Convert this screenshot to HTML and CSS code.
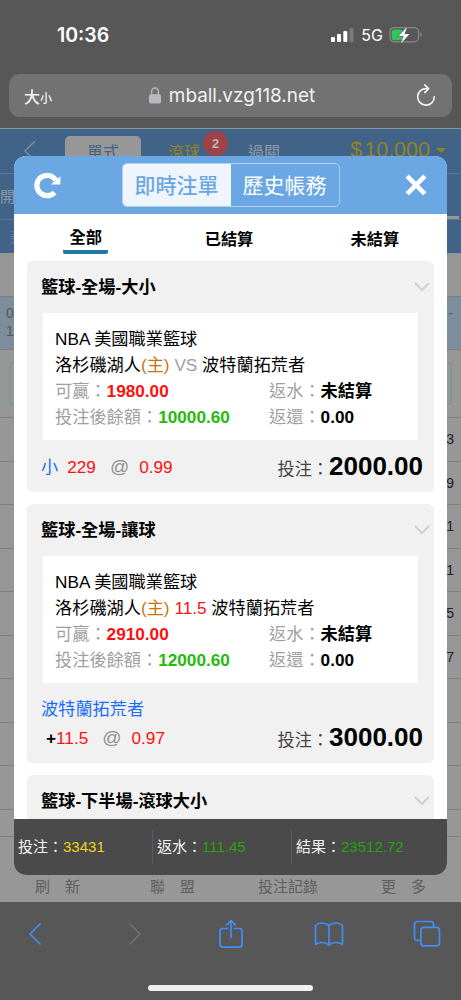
FILE: index.html
```
<!DOCTYPE html>
<html lang="zh-Hant">
<head>
    <meta charset="UTF-8">
    <meta name="viewport" content="width=device-width, initial-scale=1.0">
    <title>即時注單</title>
    <link rel="stylesheet" href="styles.css">
</head>
<body>
<div class="phone">
    <div class="status-bar">
        <span class="clock">10:36</span>
        <div class="status-icons">
            <svg class="signal" width="24" height="16" viewBox="0 0 24 16">
                <rect x="0" y="10" width="4" height="5" rx="1" fill="#fff"/>
                <rect x="6" y="7" width="4" height="8" rx="1" fill="#fff"/>
                <rect x="12.3" y="4" width="4" height="11" rx="1" fill="#fff"/>
                <rect x="18.5" y="1" width="4" height="14" rx="1" fill="#7b7b7b"/>
            </svg>
            <span class="network">5G</span>
            <svg class="battery" width="34" height="18" viewBox="0 0 34 18">
                <rect x="1" y="1.7" width="28.6" height="14.2" rx="4.3" fill="none" stroke="#8b8b8b" stroke-width="1.2"/>
                <path d="M31.2 6.5v4.6q1.6-.7 1.6-2.3t-1.6-2.3z" fill="#8b8b8b"/>
                <rect x="2.7" y="3.4" width="11" height="10.8" rx="2.8" fill="#32c759"/>
                <path d="M18.2.8L9.400 10h5.200l-2.800 7.400L20.700 8h-5.200z" fill="#fff" stroke="#575757" stroke-width="1.2" paint-order="stroke"/>
            </svg>
        </div>
    </div>

    <div class="address-bar">
        <span class="text-size">大<small>小</small></span>
        <div class="url">
            <svg width="12" height="17" viewBox="0 0 12 17">
                <rect x="0" y="7.3" width="12" height="9.2" rx="1.8" fill="#b9b8bf"/>
                <path d="M2.6 8V4.6a3.4 3.6 0 0 1 6.8 0V8" fill="none" stroke="#b9b8bf" stroke-width="1.4"/>
            </svg>
            <span>mball.vzg118.net</span>
        </div>
        <svg class="reload" width="20" height="23" viewBox="0 0 20 23">
            <path d="M11 4.6A8.300 8.300 0 1 0 18.300 12.800M8.800.900l3.800 3.800-3.800 3.900" fill="none" stroke="#f1f1f1" stroke-width="1.7" stroke-linecap="round" stroke-linejoin="round"/>
        </svg>
    </div>

    <div class="page">
        <div class="page-head">
            <div class="page-nav">
                <svg class="page-back" width="12" height="22" viewBox="0 0 12 22">
                    <path d="M11 1L1 11l10 10" fill="none" stroke="#7c94ab" stroke-width="1.2"/>
                </svg>
                <span class="page-tab active">單式</span>
                <span class="page-tab live">滾球<b class="badge">2</b></span>
                <span class="page-tab">過關</span>
                <span class="balance"><i>$</i>10,000<i class="caret"></i></span>
            </div>
            <div class="page-sub"><span>開</span><i class="underline"></i></div>
            <div class="page-sub league"><span>美</span></div>
        </div>
        <div class="page-row gap"></div>
        <div class="page-row match"><div>0<br>1</div><span>-</span></div>
        <div class="page-row odds"><div class="odds-box"></div></div>
        <div class="page-row line">3</div>
        <div class="page-row line">9</div>
        <div class="page-row line">1</div>
        <div class="page-row line">1</div>
        <div class="page-row line">5</div>
        <div class="page-row line">7</div>
        <div class="page-row line"></div>
        <div class="page-row line"></div>
        <div class="page-row line"></div>
        <div class="page-row line short"></div>
        <div class="page-foot">
            <span>刷　新</span>
            <span>聯　盟</span>
            <span>投注記錄</span>
            <span>更　多</span>
        </div>

        <div class="modal">
            <div class="modal-head">
                <svg class="refresh" width="27" height="27" viewBox="0 0 27 27">
                    <path d="M20.600 20.400A10.200 10.200 0 1 1 21.800 8.200" fill="none" stroke="#fff" stroke-width="5.2"/>
                    <path d="M26.400 4.300v8.100h-9.400z" fill="#fff"/>
                </svg>
                <div class="switch">
                    <span class="active">即時注單</span>
                    <span>歷史帳務</span>
                </div>
                <svg class="close" width="22" height="22" viewBox="0 0 22 22">
                    <path d="M2.200 2.200l17.600 17.600M19.800 2.200L2.200 19.800" stroke="#fff" stroke-width="4.6"/>
                </svg>
            </div>

            <div class="tabs">
                <span class="active">全部</span>
                <span>已結算</span>
                <span>未結算</span>
            </div>

            <div class="bets">
                <section class="card">
                    <div class="card-title">
                        <h2>籃球-全場-大小</h2>
                        <svg class="chevron" width="16" height="10" viewBox="0 0 16 10"><path d="M1 1l7 7 7-7"/></svg>
                    </div>
                    <div class="info">
                        <p>NBA 美國職業籃球</p>
                        <p>洛杉磯湖人<span class="home">(主)</span> <span class="grey">VS</span> 波特蘭拓荒者</p>
                        <div class="pair">
                            <p><span class="grey">可贏：</span><b class="red">1980.00</b></p>
                            <p><span class="grey">返水：</span><b>未結算</b></p>
                        </div>
                        <div class="pair">
                            <p><span class="grey">投注後餘額：</span><b class="green">10000.60</b></p>
                            <p><span class="grey">返還：</span><b>0.00</b></p>
                        </div>
                    </div>
                    <div class="stake">
                        <p class="pick"><span class="blue">小</span><span class="red">229</span><span class="at">@</span><span class="red">0.99</span></p>
                        <p class="amount">投注：<b>2000.00</b></p>
                    </div>
                </section>

                <section class="card">
                    <div class="card-title">
                        <h2>籃球-全場-讓球</h2>
                        <svg class="chevron" width="16" height="10" viewBox="0 0 16 10"><path d="M1 1l7 7 7-7"/></svg>
                    </div>
                    <div class="info">
                        <p>NBA 美國職業籃球</p>
                        <p>洛杉磯湖人<span class="home">(主)</span> <span class="red">11.5</span> 波特蘭拓荒者</p>
                        <div class="pair">
                            <p><span class="grey">可贏：</span><b class="red">2910.00</b></p>
                            <p><span class="grey">返水：</span><b>未結算</b></p>
                        </div>
                        <div class="pair">
                            <p><span class="grey">投注後餘額：</span><b class="green">12000.60</b></p>
                            <p><span class="grey">返還：</span><b>0.00</b></p>
                        </div>
                    </div>
                    <p class="team blue">波特蘭拓荒者</p>
                    <div class="stake handicap">
                        <p class="pick"><span class="red"><b class="plus">+</b>11.5</span><span class="at">@</span><span class="red">0.97</span></p>
                        <p class="amount">投注：<b>3000.00</b></p>
                    </div>
                </section>

                <section class="card">
                    <div class="card-title">
                        <h2>籃球-下半場-滾球大小</h2>
                        <svg class="chevron" width="16" height="10" viewBox="0 0 16 10"><path d="M1 1l7 7 7-7"/></svg>
                    </div>
                </section>
            </div>

            <div class="totals">
                <p>投注：<span class="yellow">33431</span></p>
                <p>返水：<span class="win">111.45</span></p>
                <p>結果：<span class="win">23512.72</span></p>
            </div>
        </div>
    </div>

    <div class="toolbar">
        <svg width="14" height="24" viewBox="0 0 14 24"><path d="M12 2L2 12l10 10"/></svg>
        <svg class="off" width="14" height="24" viewBox="0 0 14 24"><path d="M2 2l10 10L2 22"/></svg>
        <svg width="24" height="30" viewBox="0 0 24 30"><path d="M8.500 9.500H3.600Q1 9.500 1 12v13.500q0 2.600 2.600 2.600h16.800q2.600 0 2.600-2.600V12q0-2.500-2.600-2.500H15.500M12 18.500V2M7.500 6.200L12 1.700l4.500 4.500"/></svg>
        <svg width="30" height="26" viewBox="0 0 30 26"><path d="M15 4.500Q12 2 8 2T1.500 4.500V23.500Q4 21.500 8 21.500T15 24Q18 21.500 22 21.500T28.500 23.500V4.500Q26 2 22 2T15 4.500V24"/></svg>
        <svg width="28" height="28" viewBox="0 0 28 28"><path d="M6.500 20.500H4.500Q1.500 20.500 1.500 17.500V4.500Q1.500 1.500 4.500 1.500H17.500Q20.500 1.500 20.500 4.500V6.800"/><rect x="7.900" y="7.300" width="18.600" height="18.600" rx="3"/></svg>
    </div>
    <div class="home-bar"></div>
</div>
</body>
</html>
```

FILE: styles.css
```
* {
    margin: 0;
    padding: 0;
    box-sizing: border-box;
}
body {
    font-family: "Liberation Sans", "Noto Sans CJK TC", sans-serif;
    font-size: 17.2px;
    color: #000;
    background: #575757;
}
i {
    font-style: normal;
}
.phone {
    width: 461px;
    height: 1000px;
    display: flex;
    flex-direction: column;
    overflow: hidden;
    background: #575757;
}

/* browser chrome */
.status-bar {
    height: 74px;
    padding: 0 38px 5px 57px;
    display: flex;
    align-items: center;
    justify-content: space-between;
    color: #fff;
    font-family: Inter, sans-serif;
}
.clock {
    font-size: 19.5px;
    font-weight: 600;
}
.status-icons {
    display: flex;
    align-items: center;
}
.network {
    margin: 0 6px 0 6px;
    font-size: 16px;
    font-weight: 400;
}
.address-bar {
    flex: none;
    height: 43px;
    margin: 0 9px 11px;
    padding: 0 16px 0 15px;
    border-radius: 10px;
    background: #727272;
    color: #f1f1f1;
    display: flex;
    align-items: center;
    justify-content: space-between;
}
.text-size {
    font-size: 16px;
    font-weight: 500;
}
.text-size small {
    font-size: 12px;
}
.url {
    display: flex;
    align-items: center;
    gap: 8px;
    margin-right: 4px;
    font-family: Inter, sans-serif;
    font-size: 18.9px;
}

/* page under the modal */
.page {
    position: relative;
    flex: none;
    height: 774px;
    background: #979797;
    display: flex;
    flex-direction: column;
}
.page-head {
    height: 125px;
    background: #416388;
    border-top: 1px solid #8795a3;
}
.page-nav {
    height: 45px;
    padding: 7px 15px 0 24px;
    display: flex;
    color: #8d9aa6;
    font-size: 16px;
    border-bottom: 1px solid #56789a;
}
.page-back {
    margin-top: 4px;
}
.page-tab {
    position: relative;
    width: 76px;
    line-height: 33px;
    text-align: center;
}
.page-tab.active {
    margin-left: 29px;
    margin-right: 5px;
    color: #416388;
    background: #979797;
    border-radius: 5px;
}
.page-tab.live {
    color: #8e861b;
}
.page-tab.live + .page-tab {
    margin-left: 4px;
}
.badge {
    position: absolute;
    left: 57px;
    top: -5px;
    width: 25px;
    height: 25px;
    line-height: 25px;
    border-radius: 50%;
    background: #9f4347;
    color: #b9b9b9;
    font-size: 13px;
}
.balance {
    margin-left: auto;
    display: flex;
    align-items: center;
    gap: 2px;
    height: 29px;
    color: #91841c;
    font-size: 21.5px;
}
.caret {
    margin-left: 4px;
    border: 5px solid transparent;
    border-top-color: #91841c;
    border-bottom: 0;
}
.page-sub {
    height: 46px;
    line-height: 45px;
    display: flex;
    justify-content: space-between;
    align-items: flex-end;
    font-size: 15px;
    color: #8d9aa6;
    border-bottom: 1px solid #56789a;
}
.underline {
    width: 40px;
    height: 3px;
    margin-right: 2px;
    background: #979797;
}
.page-sub.league {
    height: 33px;
    line-height: 32px;
    padding-left: 10px;
    color: #63809c;
    border-bottom: 0;
}
.page-row {
    flex: none;
    border-bottom: 1px solid #7e7e7e;
}
.gap {
    height: 44px;
}
.match {
    height: 53px;
    padding: 7px 8px 7px 6px;
    display: flex;
    justify-content: space-between;
    background: #7e8d9b;
    color: #555;
    font-size: 14px;
    line-height: 18px;
    text-align: right;
}
.match span {
    color: #416388;
}
.odds {
    height: 68px;
    padding: 12px 9px;
}
.odds-box {
    height: 43px;
    border: 2px solid #7f9a8d;
}
.line {
    height: 43.5px;
    padding-right: 7px;
    line-height: 43px;
    text-align: right;
    font-size: 14px;
    color: #222;
}
.line.short {
    height: 27px;
}
.page-foot {
    margin-top: auto;
    height: 31px;
    padding-left: 35px;
    display: grid;
    grid-template-columns: 115px 108px 123px 1fr;
    font-size: 15px;
    line-height: 31px;
    color: #5e5e5e;
}

/* modal */
.modal {
    position: absolute;
    left: 14px;
    top: 28px;
    width: 433px;
    height: 719px;
    border-radius: 12px;
    background: #fff;
    overflow: hidden;
    display: flex;
    flex-direction: column;
}
.modal-head {
    flex: none;
    height: 58px;
    padding: 0 20px;
    background: #6ba7e3;
    display: flex;
    align-items: center;
    justify-content: space-between;
}
.switch {
    display: flex;
    height: 44px;
    margin-right: 5px;
    border: 1px solid #b0d0f0;
    border-radius: 5px;
    overflow: hidden;
}
.switch span {
    width: 108px;
    line-height: 44px;
    text-align: center;
    font-size: 21px;
    color: #fff;
}
.switch .active {
    background: #eff5fd;
    color: #6ba7e3;
    font-weight: 500;
}
.tabs {
    flex: none;
    height: 47px;
    display: grid;
    grid-template-columns: repeat(3, 1fr);
    justify-items: center;
    align-items: start;
    font-size: 16.2px;
    font-weight: bold;
}
.tabs span {
    line-height: 24px;
    margin-top: 13px;
}
.tabs span:nth-child(2) {
    margin-right: 3px;
}
.tabs .active {
    width: 45px;
    margin-top: 11px;
    margin-right: 1px;
    height: 29px;
    text-align: center;
    border-bottom: 4px solid #2379a5;
    border-radius: 2px;
}
.bets {
    flex: 1;
    padding: 0 13px;
    overflow: hidden;
}
.card {
    margin-bottom: 12px;
    padding: 0 11px 12px 14px;
    border-radius: 6px;
    background: #f1f1f1;
}
.card-title {
    height: 52px;
    margin-right: -7px;
    display: flex;
    align-items: center;
    justify-content: space-between;
}
.card-title h2 {
    margin-top: -3px;
    font-size: 17.2px;
}
.chevron {
    fill: none;
    stroke: #cfcfcf;
    stroke-width: 2;
}
.info {
    height: 127px;
    margin: 0 5px 0 2px;
    padding: 13px 12px 10px;
    background: #fff;
    line-height: 26px;
    white-space: nowrap;
}
.pair {
    display: grid;
    grid-template-columns: 214px 1fr;
}
.stake {
    display: flex;
    justify-content: space-between;
    height: 40px;
    align-items: flex-end;
}
.pick {
    display: flex;
    line-height: 26px;
}
.pick .at {
    margin: 0 10px 0 14px;
    font-size: 19px;
    color: #8f8f8f;
}
.pick .blue {
    margin-right: 9px;
}
.amount {
    margin-bottom: -4px;
    line-height: 30px;
    color: #444;
}
.amount b {
    font-size: 26px;
    color: #000;
}
.team {
    margin-top: 13px;
    line-height: 26px;
}
.handicap {
    height: 29px;
}
.handicap .pick {
    padding-left: 5px;
}
.plus {
    color: #000;
}
.grey {
    color: #9f9f9f;
}
.home {
    color: #c9720b;
}
.red {
    color: #fd1010;
}
.green {
    color: #25ba0c;
}
.blue {
    color: #1a6dfa;
}
.totals {
    flex: none;
    height: 56px;
    background: #4a4a4a;
    color: #f1f1f1;
    font-size: 15px;
    display: grid;
    grid-template-columns: 138px 139px 1fr;
    align-items: center;
}
.totals p {
    height: 34px;
    line-height: 34px;
    padding-left: 4px;
}
.totals p + p {
    border-left: 1px solid #5c5c5c;
}
.yellow {
    color: #eed51a;
}
.win {
    color: #27a30c;
}

/* bottom toolbar */
.toolbar {
    height: 64px;
    display: grid;
    grid-template-columns: repeat(5, 98px);
    justify-content: center;
    justify-items: center;
    align-items: center;
    fill: none;
    stroke: #438df5;
    stroke-width: 1.7;
    stroke-linecap: round;
    stroke-linejoin: round;
}
.toolbar .off {
    margin-left: 4px;
    stroke: #717171;
}
.home-bar {
    width: 165px;
    height: 6px;
    margin: 19px auto 0;
    border-radius: 3px;
    background: #f1f1f1;
}
```
